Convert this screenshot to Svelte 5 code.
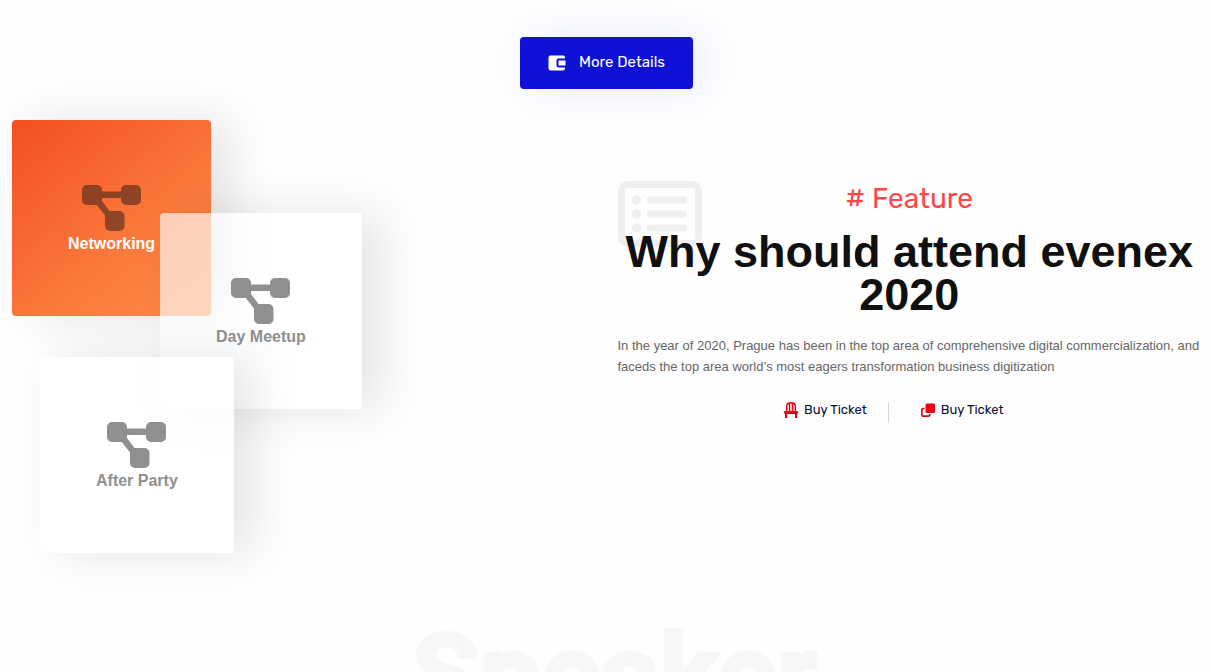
<script>
  const topics = ['Networking', 'Day Meetup', 'After Party'];
</script>

<svelte:head>
  <title>Evenex 2020</title>
</svelte:head>

<main>
  <div class="actions">
    <button type="button" class="more">
      <svg width="18" height="16" viewBox="0 0 18 16" aria-hidden="true">
        <path
          fill="currentColor"
          d="M2.5 .5H15A2 2 0 0 1 17 2.5V3.5H10.500A2 2 0 0 0 8.500 5.500V10.500A2 2 0 0 0 10.500 12.500H17V13.500A2 2 0 0 1 15 15.500H2.500A2 2 0 0 1 .5 13.500V2.500A2 2 0 0 1 2.500 .5Z"
        />
        <path fill="currentColor" d="M10.500 5.500H17.500V10.500H10.500Z" />
      </svg>
      <span>More Details</span>
    </button>
  </div>

  <section class="feature">
    <div class="cards">
      {#each topics as topic, i}
        <article class="card" class:active={i === 0}>
          <svg width="59" height="46" viewBox="0 0 59 46" aria-hidden="true">
            <path
              fill="currentColor"
              d="M5 0H15A5 5 0 0 1 20 5V6.500H39V5A5 5 0 0 1 44 0H54A5 5 0 0 1 59 5V15A5 5 0 0 1 54 20H44A5 5 0 0 1 39 15V13H20V16L27.500 26H37.500A5 5 0 0 1 42.500 31V41A5 5 0 0 1 37.500 46H28A5 5 0 0 1 23 41V30.500L14.800 20H5A5 5 0 0 1 0 15V5A5 5 0 0 1 5 0Z"
            />
          </svg>
          <h3>{topic}</h3>
        </article>
      {/each}
    </div>

    <div class="intro">
      <svg class="backdrop" width="84" height="66" viewBox="0 0 84 66" aria-hidden="true">
        <rect x="3.500" y="3.500" width="77" height="59" rx="7" fill="none" stroke="#efefef" stroke-width="7" />
        <g fill="#efefef">
          <circle cx="18.500" cy="19" r="4.700" />
          <circle cx="18.500" cy="33" r="4.700" />
          <circle cx="18.500" cy="47" r="4.700" />
          <rect x="29" y="15.500" width="40" height="7" rx="3.500" />
          <rect x="29" y="29.500" width="40" height="7" rx="3.500" />
          <rect x="29" y="43.500" width="40" height="7" rx="3.500" />
        </g>
      </svg>
      <p class="tag"># Feature</p>
      <h2>Why should attend evenex 2020</h2>
      <p class="copy">
        In the year of 2020, Prague has been in the top area of comprehensive digital
        commercialization, and faceds the top area world’s most eagers transformation business
        digitization
      </p>
      <ul class="links">
        <li>
          <a href="#ticket">
            <svg width="14" height="16" viewBox="0 0 14 16" aria-hidden="true">
              <path
                d="M2.700 9V4.500Q2.700 .8 7 .8T11.300 4.500V9M5.500 1.500V9M8.500 1.500V9"
                fill="none"
                stroke="#eb0014"
                stroke-width="1.500"
              />
              <path fill="#eb0014" d="M1 9H13Q14 9 14 10V11.500H13V16H11V12H3V16H1V11.500H0V10Q0 9 1 9Z" />
            </svg>
            Buy Ticket
          </a>
        </li>
        <li>
          <a href="#group-ticket">
            <svg width="14" height="15" viewBox="0 0 14 15" aria-hidden="true">
              <rect x="4.500" y="0.500" width="9.500" height="9.500" rx="1.500" fill="#eb0014" />
              <path
                d="M3.500 5.500H2Q.9 5.500 .9 6.600V12Q.9 13.200 2 13.200H7.500Q8.700 13.200 8.700 12V11"
                fill="none"
                stroke="#eb0014"
                stroke-width="1.700"
              />
            </svg>
            Buy Ticket
          </a>
        </li>
      </ul>
    </div>
  </section>

  <section class="speakers">
    <h2>Speaker</h2>
  </section>
</main>

<style>
  :global(body) {
    background: #fefefe;
  }

  main {
    padding: 37px 10px 0 12px;
    font-family: 'Liberation Sans', Arial, sans-serif;
  }

  h2,
  h3,
  p,
  ul {
    margin: 0;
    padding: 0;
  }

  .actions {
    display: flex;
    justify-content: center;
  }

  .more {
    display: flex;
    align-items: center;
    gap: 13px;
    height: 52px;
    padding: 0 28px;
    border: 0;
    border-radius: 4px;
    background: #0e12d6;
    color: #fff;
    font: 400 15px/20px Rubik, Roboto, sans-serif;
    box-shadow: 10px 0 44px rgba(50, 80, 255, 0.1);
    cursor: pointer;
  }

  .more span {
    padding-bottom: 2px;
  }

  .feature {
    display: grid;
    grid-template-columns: 1fr 1fr;
    column-gap: 22px;
    margin-top: 31px;
  }

  .cards {
    display: flex;
    flex-direction: column;
    align-items: flex-start;
  }

  .card {
    display: flex;
    flex-direction: column;
    align-items: center;
    gap: 1px;
    box-sizing: border-box;
    height: 196px;
    padding: 65px 56px 0;
    border-radius: 4px;
    background: rgba(255, 255, 255, 0.64);
    box-shadow: 20px 0 48px rgba(0, 0, 0, 0.1);
    color: #909090;
  }

  .card:nth-child(2) {
    margin: -103px 0 0 148px;
  }

  .card:nth-child(3) {
    margin: -52px 0 0 28px;
  }

  .card.active {
    background: linear-gradient(140deg, #f24f22, #fb783b 60%, #fe8c48);
    color: rgba(17, 17, 17, 0.46);
  }

  .card h3 {
    font-size: 16px;
    line-height: 24px;
    font-weight: 700;
  }

  .card.active h3 {
    color: #fff;
  }

  .intro {
    position: relative;
    padding-top: 61px;
  }

  .backdrop {
    position: absolute;
    top: 61px;
    left: 0;
    z-index: -1;
  }

  .tag {
    color: #ff4646;
    font: 400 28px/36px Rubik, Roboto, sans-serif;
    text-align: center;
  }

  .intro h2 {
    margin-top: 13px;
    color: #101010;
    font-size: 45px;
    line-height: 43px;
    font-weight: 700;
    text-align: center;
  }

  .copy {
    margin-top: 19px;
    color: #666;
    font-size: 13px;
    line-height: 21px;
  }

  .links {
    display: flex;
    justify-content: center;
    margin: 25px 42px 0 0;
    list-style: none;
  }

  .links li {
    height: 21px;
    padding: 0 21px 0 32px;
  }

  .links li + li {
    border-left: 1px solid #d5d5d5;
  }

  .links a {
    display: flex;
    align-items: center;
    gap: 6px;
    color: #0a1033;
    font: 400 13px/16px Rubik, Roboto, sans-serif;
    text-decoration: none;
  }

  .speakers {
    margin-top: 60px;
    padding-left: 16px;
  }

  .speakers h2 {
    color: #f7f7f7;
    -webkit-text-stroke: 4px #f7f7f7;
    stroke-linejoin: round;
    font: 700 110px/124px Roboto, sans-serif;
    text-align: center;
  }
</style>
